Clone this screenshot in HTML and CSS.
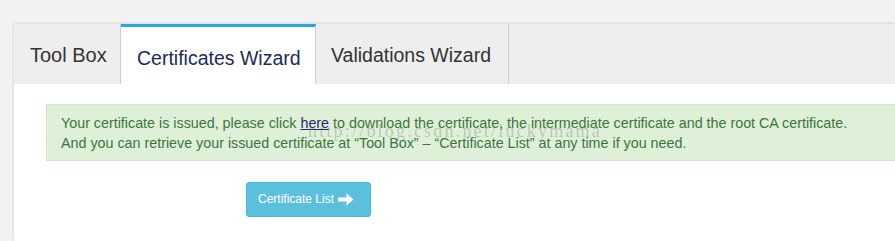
FILE: index.html
```html
<!DOCTYPE html>
<html>
<head>
<meta charset="utf-8">
<link rel="stylesheet" href="styles.css">
</head>
<body>
<div class="panel">
  <div class="tabs">
    <div class="tab tab-tool">Tool Box</div>
    <div class="tab tab-active">Certificates Wizard</div>
    <div class="tab tab-valid">Validations Wizard</div>
  </div>
  <div class="content">
    <div class="alert">
      <p class="line">Your certificate is issued, please click <a class="link" href="#">here</a> to download the certificate, the intermediate certificate and the root CA certificate.</p>
      <p class="line">And you can retrieve your issued certificate at “Tool Box” – “Certificate List” at any time if you need.</p>
      <span class="watermark">http://blog.csdn.net/luckymama</span>
    </div>
    <div class="actions">
      <button class="btn">Certificate List
        <svg class="arrow" width="16" height="13" viewBox="0 0 16 13"><path d="M0 4.5H8.5V0.5L15.5 6.5L8.5 12.5V8.5H0Z" fill="#fff"/></svg>
      </button>
    </div>
  </div>
</div>
</body>
</html>
```
FILE: styles.css
```css
html, body {
  margin: 0;
  padding: 0;
  background: #f2f2f2;
  overflow: hidden;
  font-family: "Liberation Sans", Arial, sans-serif;
}
.panel {
  margin: 24px 0 0 14px;
  height: 217px;
  overflow: hidden;
  background: #fff;
  box-shadow: 0 0 3px rgba(0, 0, 0, 0.18);
}
.tabs {
  display: flex;
  height: 60px;
  background: #eeeeee;
}
.tab {
  box-sizing: border-box;
  height: 60px;
  padding: 19px 0 0 16px;
  font-size: 19.5px;
  line-height: 24px;
  color: #333;
  border-right: 1px solid #cfcfcf;
  white-space: nowrap;
}
.tab-tool {
  width: 107px;
  font-size: 20px;
}
.tab-active {
  width: 195px;
  background: #fff;
  color: #1c2a5b;
  border-top: 3px solid #29a6df;
}
.tab-valid {
  width: 193px;
  padding-left: 15px;
}
.content {
  padding: 20px 0 0 32px;
}
.alert {
  position: relative;
  box-sizing: border-box;
  width: 900px;
  height: 57px;
  padding: 8px 14px 7px;
  background: #dff0d8;
  border: 1px solid #d6e9c6;
  color: #3c763d;
  font-size: 14.3px;
  line-height: 20px;
}
.line {
  margin: 0;
  white-space: nowrap;
}
.link {
  color: #27276e;
  text-decoration: underline;
}
.watermark {
  position: absolute;
  left: 261px;
  top: 17px;
  font-family: "Liberation Serif", "Times New Roman", serif;
  font-size: 18px;
  line-height: 18px;
  letter-spacing: 2.2px;
  color: rgba(110, 110, 110, 0.33);
  white-space: nowrap;
  pointer-events: none;
}
.actions {
  padding: 21px 0 0 200px;
}
.btn {
  display: inline-flex;
  align-items: center;
  gap: 4px;
  box-sizing: border-box;
  height: 35px;
  width: 125px;
  padding: 0 0 0 11px;
  background: #5bc0de;
  border: 1px solid #46b8da;
  border-radius: 3px;
  color: #fff;
  font-family: "Liberation Sans", Arial, sans-serif;
  font-size: 12px;
  line-height: 17px;
  white-space: nowrap;
}
.arrow {
  display: block;
}
```
